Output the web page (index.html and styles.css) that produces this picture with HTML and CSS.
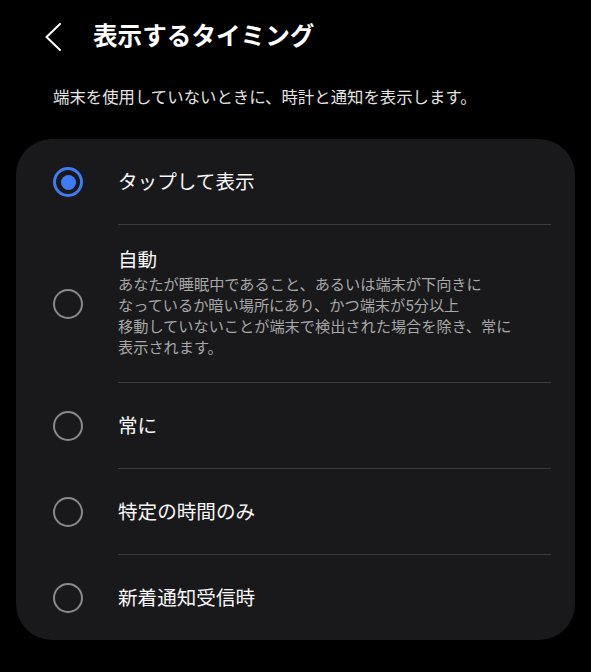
FILE: index.html
```html
<!DOCTYPE html>
<html lang="ja">

<head>
  <title>表示するタイミング</title>
  <meta charset="UTF-8">
  <meta name="viewport" content="width=device-width, initial-scale=1">
  <link rel="stylesheet" href="styles.css">
</head>

<body>

  <div class="header">
    <svg class="back" width="18" height="28" viewBox="0 0 18 28">
      <path d="M16 1 L2.5 14 L16 27" fill="none" stroke="#ffffff" stroke-width="2" stroke-linecap="round" stroke-linejoin="round"/>
    </svg>
    <h1>表示するタイミング</h1>
  </div>

  <p class="intro">端末を使用していないときに、時計と通知を表示します。</p>

  <div class="card">
    <div class="row">
      <span class="radio selected"></span>
      <div class="row-body">
        <div class="label">タップして表示</div>
      </div>
    </div>

    <div class="row">
      <span class="radio"></span>
      <div class="row-body multi">
        <div class="label">自動</div>
        <div class="desc">あなたが睡眠中であること、あるいは端末が下向きに<br>なっているか暗い場所にあり、かつ端末が5分以上<br>移動していないことが端末で検出された場合を除き、常に<br>表示されます。</div>
      </div>
    </div>

    <div class="row">
      <span class="radio"></span>
      <div class="row-body">
        <div class="label">常に</div>
      </div>
    </div>

    <div class="row">
      <span class="radio"></span>
      <div class="row-body">
        <div class="label">特定の時間のみ</div>
      </div>
    </div>

    <div class="row">
      <span class="radio"></span>
      <div class="row-body">
        <div class="label">新着通知受信時</div>
      </div>
    </div>
  </div>

</body>

</html>
```

FILE: styles.css
```css
body {
  font-family: Roboto, "Noto Sans CJK JP", sans-serif;
  background: #000000;
  color: #f5f5f5;
  margin: 0;
}

.header {
  display: flex;
  align-items: center;
  height: 74px;
  padding-left: 44px;
}

.back {
  margin-right: 31px;
}

h1 {
  margin: 0;
  font-size: 24.6px;
  line-height: 32px;
  font-weight: bold;
  color: #ffffff;
}

.intro {
  margin: 12px 0 0;
  padding-left: 53px;
  font-size: 16.4px;
  line-height: 24px;
  color: #e4e4e4;
}

.card {
  margin: 29px 16px 0;
  background: #19191b;
  border-radius: 36px;
}

.row {
  display: flex;
  align-items: center;
  padding-left: 37px;
}

.radio {
  box-sizing: border-box;
  width: 30px;
  height: 30px;
  flex-shrink: 0;
  border: 2.5px solid #8a8a8a;
  border-radius: 50%;
  display: flex;
  align-items: center;
  justify-content: center;
}

.radio.selected {
  border: 3px solid #3e7cf5;
}

.radio.selected::after {
  content: "";
  width: 15px;
  height: 15px;
  border-radius: 50%;
  background: #3e7cf5;
}

.row-body {
  flex: 1;
  margin-left: 35px;
  margin-right: 24px;
  padding: 30px 0 27px;
  border-bottom: 1px solid #3a3a3c;
}

.row:last-child .row-body {
  border-bottom: none;
}

.row-body.multi {
  padding: 23px 0;
}

.label {
  font-size: 19.6px;
  line-height: 28px;
  color: #f7f7f7;
}

.multi .label {
  line-height: 26px;
}

.desc {
  margin-top: 1px;
  font-size: 15.2px;
  line-height: 21px;
  color: #a8a8a8;
}
```
